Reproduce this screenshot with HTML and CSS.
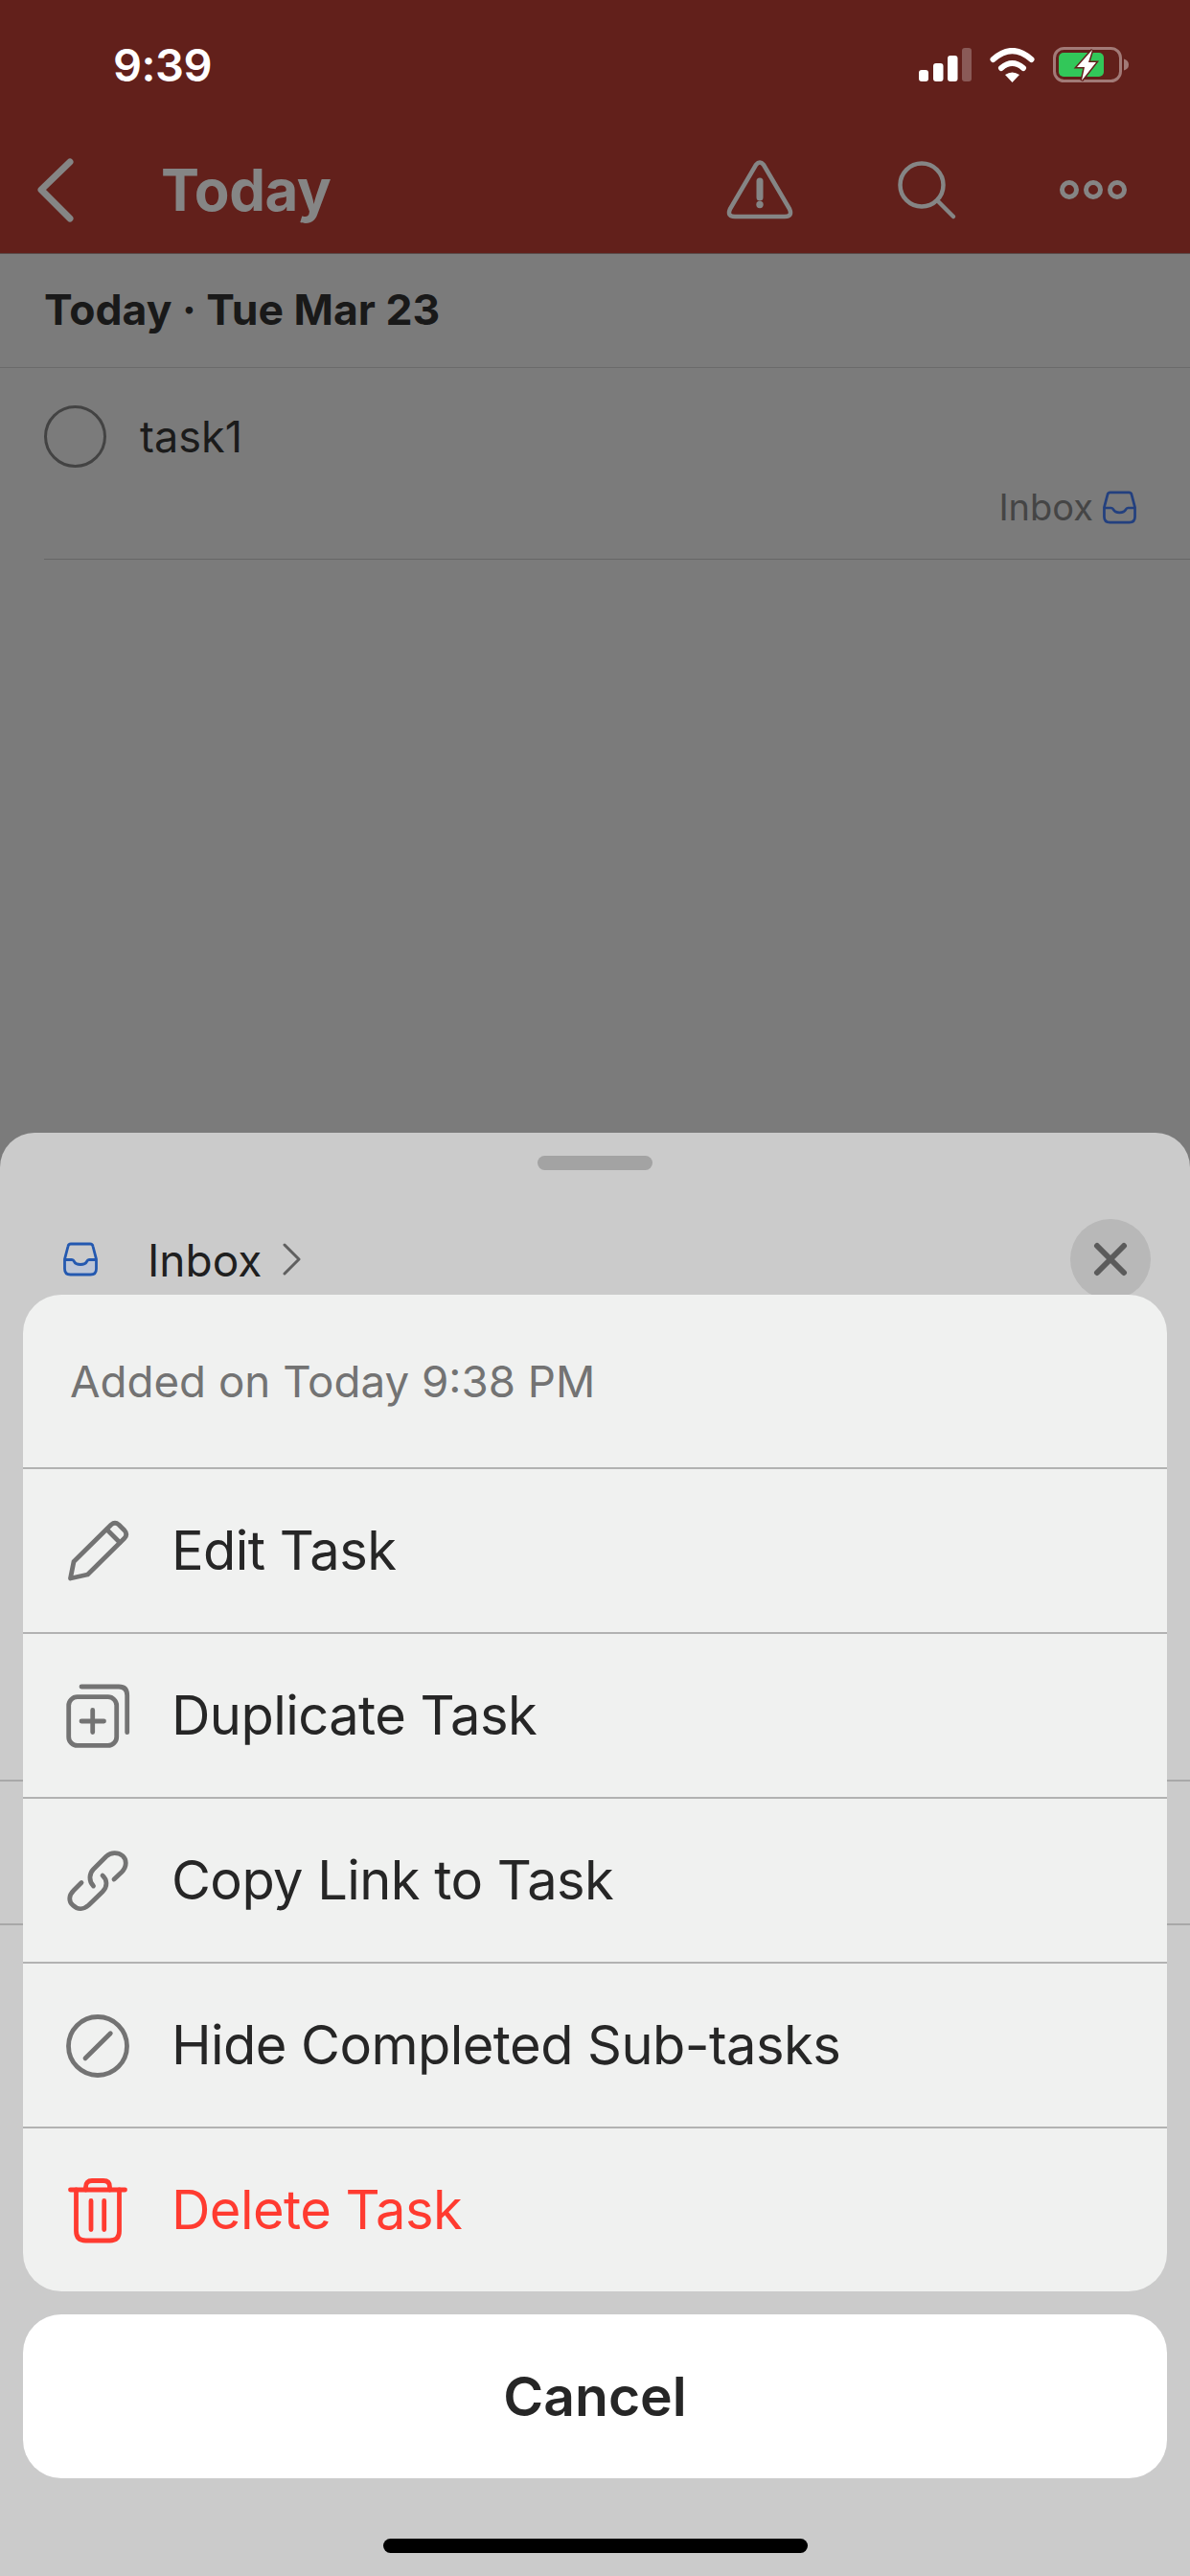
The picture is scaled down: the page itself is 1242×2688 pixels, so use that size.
FILE: index.html
```html
<!DOCTYPE html>
<html lang="en">
<head>
<meta charset="utf-8">
<title>Today</title>
<link rel="stylesheet" href="styles.css">
</head>
<body>
<div class="screen">
  <header class="topbar">
    <div class="status">
      <span class="time">9:39</span>
      <div class="status-icons">
        <svg class="signal" viewBox="0 0 55 36"><rect x="0" y="23" width="10" height="12" rx="3" fill="#fff"/><rect x="15" y="16" width="10.500" height="19" rx="3" fill="#fff"/><rect x="30" y="8" width="10.500" height="27" rx="3" fill="#fff"/><rect x="45" y="0" width="10" height="35" rx="3" fill="#8a5a57"/></svg>
        <svg class="wifi" viewBox="0 0 47 36"><path d="M3.500 12Q23.500 -6 43.500 12" fill="none" stroke="#fff" stroke-width="6" stroke-linecap="round"/><path d="M12 21Q23.500 11 35 21" fill="none" stroke="#fff" stroke-width="6" stroke-linecap="round"/><path d="M16 28Q23.500 23 31 28L23.500 36Z" fill="#fff"/></svg>
        <svg class="battery" viewBox="0 0 80 38"><rect x="1.500" y="1.500" width="69" height="34" rx="10" fill="none" stroke="#a27a77" stroke-width="3"/><path d="M74 12.500Q79 14 79 18.500Q79 23 74 24.500Z" fill="#a27a77"/><rect x="6" y="6" width="47" height="25" rx="5" fill="#32c759"/><path d="M41 3L25 21H33L30 35L45 16H37Z" fill="#fff" stroke="#62201b" stroke-width="3" paint-order="stroke"/></svg>
      </div>
    </div>
    <nav class="navbar">
      <svg class="back" viewBox="0 0 44 70"><path d="M37 6L7 35L37 65" fill="none" stroke="#858585" stroke-width="7" stroke-linecap="round" stroke-linejoin="round"/></svg>
      <h1 class="nav-title">Today</h1>
      <div class="nav-icons">
        <svg class="nav-icon" viewBox="0 0 80 80"><path d="M36 14Q40 9 44 14L71 60Q74.500 68 66 68H14Q5.500 68 9 60Z" fill="none" stroke="#858585" stroke-width="4.500" stroke-linejoin="round"/><path d="M40 31V48" stroke="#858585" stroke-width="7" stroke-linecap="round"/><circle cx="40" cy="55.500" r="3.700" fill="#858585"/></svg>
        <svg class="nav-icon" viewBox="0 0 80 80"><circle cx="35" cy="35" r="22.500" fill="none" stroke="#858585" stroke-width="4.500"/><path d="M52 52L68 68" stroke="#858585" stroke-width="4.500" stroke-linecap="round"/></svg>
        <svg class="nav-icon" viewBox="0 0 80 80"><g fill="none" stroke="#858585" stroke-width="5"><circle cx="15" cy="40" r="7.500"/><circle cx="40" cy="40" r="7.500"/><circle cx="65" cy="40" r="7.500"/></g></svg>
      </div>
    </nav>
  </header>

  <main class="list">
    <div class="section-head">Today · Tue Mar 23</div>
    <div class="task">
      <div class="task-main">
        <span class="check"></span>
        <span class="task-name">task1</span>
      </div>
      <div class="task-meta">
        <span class="task-project">Inbox</span>
        <svg class="inbox inbox-dim" viewBox="0 0 36 36"><path d="M8 2H28Q30.500 2 31 4.500L34.500 18V28Q34.500 34 28.500 34H7.500Q1.500 34 1.500 28V18L5 4.500Q5.500 2 8 2Z" fill="none" stroke="#23407f" stroke-width="2.800"/><path d="M1.500 18.500H9Q10.500 18.500 11.500 20.500Q13 23.500 18 23.500Q23 23.500 24.500 20.500Q25.500 18.500 27 18.500H34.500" fill="none" stroke="#23407f" stroke-width="2.800"/></svg>
      </div>
    </div>
  </main>

  <section class="sheet">
    <div class="handle"></div>
    <div class="sheet-head">
      <svg class="inbox" viewBox="0 0 36 36"><path d="M1.500 18.500H9Q10.500 18.500 11.500 20.500Q13 23.500 18 23.500Q23 23.500 24.500 20.500Q25.500 18.500 27 18.500H34.500V28Q34.500 34 28.500 34H7.500Q1.500 34 1.500 28Z" fill="#bcc5d6"/><path d="M8 2H28Q30.500 2 31 4.500L34.500 18V28Q34.500 34 28.500 34H7.500Q1.500 34 1.500 28V18L5 4.500Q5.500 2 8 2Z" fill="none" stroke="#2459b0" stroke-width="2.800"/><path d="M1.500 18.500H9Q10.500 18.500 11.500 20.500Q13 23.500 18 23.500Q23 23.500 24.500 20.500Q25.500 18.500 27 18.500H34.500" fill="none" stroke="#2459b0" stroke-width="2.800"/></svg>
      <span class="sheet-project">Inbox</span>
      <svg class="chevron" viewBox="0 0 20 34"><path d="M2 2L17 17L2 32" fill="none" stroke="#5f5f5f" stroke-width="3" stroke-linecap="round" stroke-linejoin="round"/></svg>
      <span class="close">
        <svg class="close-x" viewBox="0 0 36 36"><path d="M4 4L32 32M32 4L4 32" stroke="#5b5b5b" stroke-width="6" stroke-linecap="round"/></svg>
      </span>
    </div>
    <div class="sheet-row sheet-row-first"></div>
    <div class="sheet-row"></div>
  </section>

  <div class="actions">
    <div class="menu">
      <div class="menu-info">Added on Today 9:38 PM</div>
      <div class="menu-row">
        <svg class="menu-icon" viewBox="0 0 80 80"><g class="ico"><path d="M11.500 69L15 51.500L54 13Q58 9.500 62 13L68 19Q71.500 23 68 27L29.500 65Z"/><path d="M49.500 18L63 31.500"/></g></svg>
        <span class="menu-label">Edit Task</span>
      </div>
      <div class="menu-row">
        <svg class="menu-icon" viewBox="0 0 80 80"><g class="ico"><rect x="9.700" y="20.700" width="50" height="50.700" rx="9"/><path d="M34.700 34.500V57.500M23 46H46.500"/><path d="M23 10H62Q70.700 10 70.700 19V57.700"/></g></svg>
        <span class="menu-label">Duplicate Task</span>
      </div>
      <div class="menu-row">
        <svg class="menu-icon" viewBox="0 0 80 80"><g class="ico"><path d="M57 39L65 31.500C71 25.500 70 18 66 14.500C61 10.500 54 10.500 49 15L35.500 28.500C31 33 30.500 41 35.500 46"/><path d="M23 42.500L15 50.500C9.500 56 9.500 62 14 66C19 71 25.500 70.500 30.500 66L45 52C50.500 46.500 50 39.500 45 35"/></g></svg>
        <span class="menu-label">Copy Link to Task</span>
      </div>
      <div class="menu-row">
        <svg class="menu-icon" viewBox="0 0 80 80"><g class="ico"><circle cx="40" cy="41" r="30.500"/><path d="M27 53.700L53.300 27.700"/></g></svg>
        <span class="menu-label">Hide Completed Sub-tasks</span>
      </div>
      <div class="menu-row menu-row-danger">
        <svg class="menu-icon" viewBox="0 0 80 80"><g class="ico ico-danger"><path d="M11.500 19H68.500"/><path d="M27.500 19V16Q27.500 9.500 34 9.500H46Q52.500 9.500 52.500 16V19"/><path d="M17.500 19V62Q17.500 72 27.500 72H52.500Q62.500 72 62.500 62V19"/><path d="M33 30.500V60.500M46.700 30.500V60.500"/></g></svg>
        <span class="menu-label">Delete Task</span>
      </div>
    </div>
    <div class="cancel">Cancel</div>
  </div>

  <div class="home-bar"></div>
</div>
</body>
</html>
```

FILE: styles.css
```css
* { box-sizing: border-box; }
html, body { margin: 0; padding: 0; }
body { font-family: Inter, "Liberation Sans", sans-serif; background: #7b7b7b; }

.screen {
  position: relative;
  width: 1242px;
  height: 2688px;
  overflow: hidden;
  background: #7b7b7b;
}

/* top bar */
.topbar {
  background: #62201b;
  height: 265px;
  border-bottom: 1px solid #5a4a48;
}
.status {
  height: 131px;
  display: flex;
  align-items: center;
  padding: 4px 63px 0 118px;
}
.time {
  color: #fff;
  font-size: 47px;
  font-weight: 600;
  letter-spacing: -0.5px;
}
.status-icons {
  margin-left: auto;
  display: flex;
  align-items: center;
  gap: 19px;
}
.signal { width: 55px; height: 36px; }
.wifi { width: 47px; height: 36px; }
.battery { width: 80px; height: 38px; }

.navbar {
  height: 133px;
  display: flex;
  align-items: center;
  padding: 0 61px 0 36px;
}
.back { width: 44px; height: 70px; }
.nav-title {
  margin: 0 0 0 88px;
  font-size: 60px;
  font-weight: 700;
  color: #858585;
  letter-spacing: -0.5px;
}
.nav-icons {
  margin-left: auto;
  display: flex;
  gap: 94px;
}
.nav-icon { width: 80px; height: 80px; display: block; }

/* list behind the sheet */
.section-head {
  height: 119px;
  padding: 0 0 3px 46px;
  display: flex;
  align-items: center;
  font-size: 44.500px;
  font-weight: 700;
  color: #191919;
  border-bottom: 1px solid #6a6a6a;
}
.task {
  margin-left: 46px;
  height: 200px;
  padding-top: 39px;
  border-bottom: 1px solid #666;
}
.task-main {
  display: flex;
  align-items: center;
  gap: 35px;
}
.check {
  width: 65px;
  height: 65px;
  border-radius: 50%;
  border: 3.500px solid #434343;
}
.task-name {
  font-size: 45px;
  color: #1b1b1b;
}
.task-meta {
  margin-top: 18px;
  padding-right: 56px;
  display: flex;
  justify-content: flex-end;
  align-items: center;
  gap: 10px;
}
.task-project {
  font-size: 38px;
  color: #454545;
}
.inbox { width: 36px; height: 36px; display: block; }
.inbox-dim { width: 35px; height: 35px; }

/* bottom sheet */
.sheet {
  position: absolute;
  left: 0;
  right: 0;
  top: 1182px;
  bottom: 0;
  background: #cbcbcb;
  border-radius: 36px 36px 0 0;
}
.handle {
  width: 120px;
  height: 15px;
  margin: 24px auto 0;
  border-radius: 8px;
  background: #a3a3a3;
}
.sheet-head {
  margin-top: 51px;
  height: 84px;
  padding: 0 41px 0 66px;
  display: flex;
  align-items: center;
}
.sheet-project {
  margin-left: 52px;
  padding-top: 2px;
  font-size: 46px;
  color: #1f1f1f;
}
.chevron { width: 20px; height: 34px; margin-left: 22px; }
.close {
  margin-left: auto;
  width: 84px;
  height: 84px;
  border-radius: 50%;
  background: #b8b8b8;
  display: flex;
  align-items: center;
  justify-content: center;
}
.close-x { width: 36px; height: 36px; }
.sheet-row {
  height: 150px;
  border-bottom: 2px solid #a8a8a8;
}
.sheet-row-first { height: 503px; }

/* action sheet */
.actions {
  position: absolute;
  left: 24px;
  right: 24px;
  bottom: 102px;
  display: flex;
  flex-direction: column;
  gap: 24px;
}
.menu {
  background: #f0f1f0;
  border-radius: 40px;
  overflow: hidden;
}
.menu-info {
  height: 180px;
  padding: 0 0 0 49px;
  display: flex;
  align-items: center;
  font-size: 45.700px;
  color: #737373;
}
.menu-row {
  height: 172px;
  border-top: 2px solid #b2b2b2;
  padding-left: 38px;
  display: flex;
  align-items: center;
  gap: 37px;
  font-size: 56px;
  letter-spacing: -0.550px;
  color: #262626;
}
.menu-row-danger { color: #ff3b30; }
.menu-icon { width: 80px; height: 80px; display: block; }
.ico {
  fill: none;
  stroke: #737373;
  stroke-width: 4.800;
  stroke-linecap: round;
  stroke-linejoin: round;
}
.ico-danger { stroke: #ff3b30; }

.cancel {
  height: 171px;
  background: #fff;
  border-radius: 40px;
  display: flex;
  align-items: center;
  justify-content: center;
  font-size: 57px;
  font-weight: 600;
  color: #262626;
}

.home-bar {
  position: absolute;
  left: 400px;
  top: 2649px;
  width: 443px;
  height: 15px;
  border-radius: 8px;
  background: #000;
}
```
